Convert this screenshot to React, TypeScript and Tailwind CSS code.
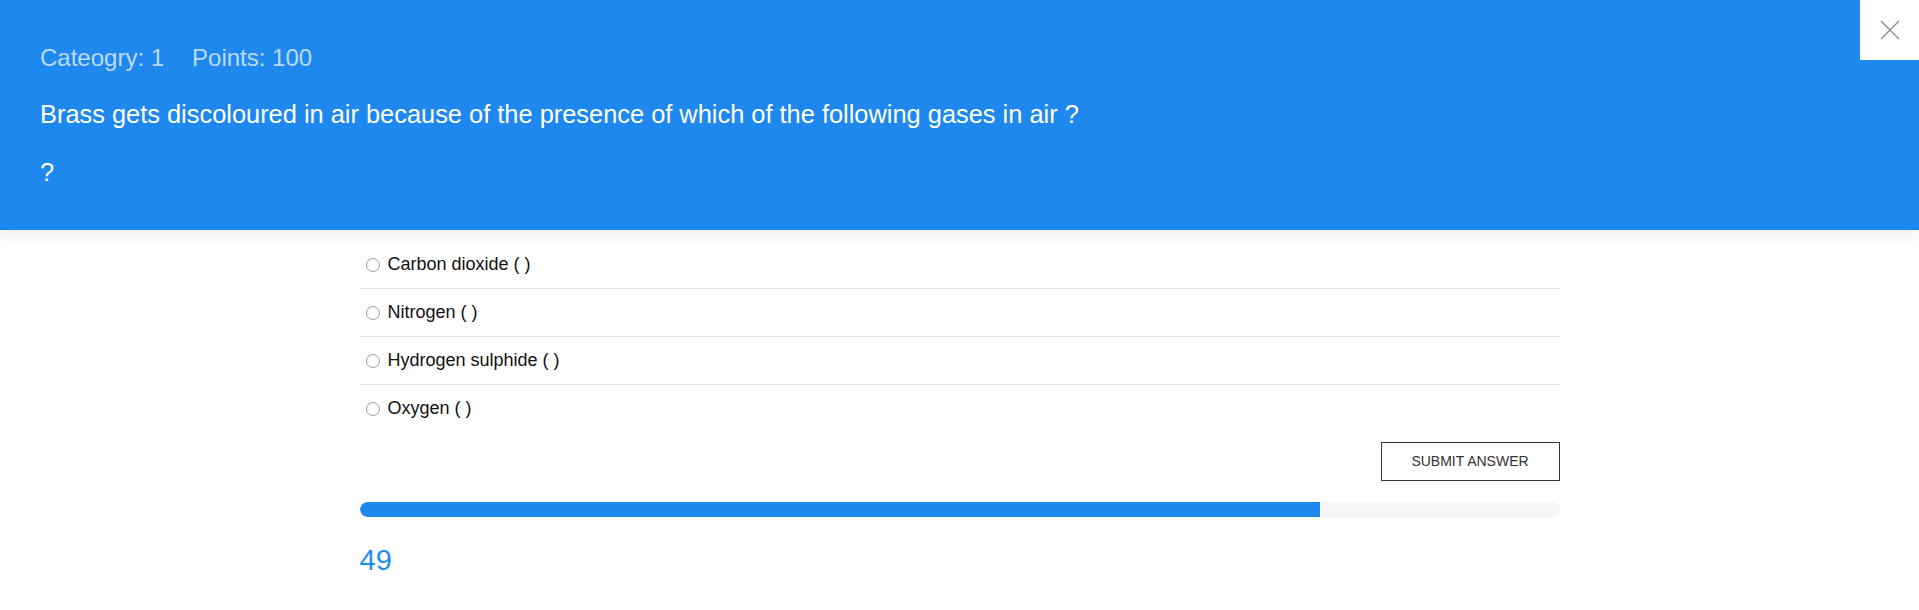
const options = ["Carbon dioxide ( )", "Nitrogen ( )", "Hydrogen sulphide ( )", "Oxygen ( )"];

export default function App() {
  const progress = 80;

  return (
    <div className="min-h-[610px] bg-white font-['Liberation_Sans',Arial,sans-serif]">
      {/* question header */}
      <div className="relative z-10 bg-[#1f88ef] pl-[40px] pr-20 pt-[44px] pb-[43px] shadow-[0_6px_18px_rgba(0,0,0,0.07)]">
        <div className="flex text-[24px] leading-[28px] text-white/70">
          <span className="mr-[28px]">Cateogry: 1</span>
          <span>Points: 100</span>
        </div>
        <div className="mt-[27px] text-[25.4px] leading-[30px] text-white">
          Brass gets discoloured in air because of the presence of which of the following gases in air ?
        </div>
        <div className="mt-[28px] text-[25.4px] leading-[30px] text-white">?</div>

        <button className="absolute right-0 top-0 flex h-[60px] w-[59px] items-center justify-center bg-white">
          <svg width="20" height="20" viewBox="0 0 20 20" fill="none" stroke="#8a8a8a" strokeWidth="1.3">
            <path d="M1 1L19 19M19 1L1 19" />
          </svg>
        </button>
      </div>

      <div className="mx-auto mt-[11px] w-[1200px]">
        <ul>
          {options.map((opt, i) => (
            <li
              key={opt}
              className={`flex items-center py-3 pl-[6px] ${i < options.length - 1 ? "border-b border-[#dedede]" : ""}`}
            >
              <span className="mr-2 h-[14px] w-[14px] shrink-0 rounded-full border border-[#a0a0a0] bg-white" />
              <span className="text-[18px] leading-[23px] text-[#111]">{opt}</span>
            </li>
          ))}
        </ul>

        <div className="mt-[10px] flex justify-end">
          <button className="h-[39px] w-[179px] border border-[#333] bg-white text-[14px] text-[#333]">
            SUBMIT ANSWER
          </button>
        </div>

        <div className="mt-[21px] h-[15px] w-full overflow-hidden rounded-full bg-[#f6f6f6]">
          <div className="h-full rounded-l-full bg-[#1f88ef]" style={{ width: `${progress}%` }} />
        </div>

        <div className="mt-[26px] text-[29px] leading-[34px] text-[#1a8fef]">49</div>
      </div>
    </div>
  );
}
